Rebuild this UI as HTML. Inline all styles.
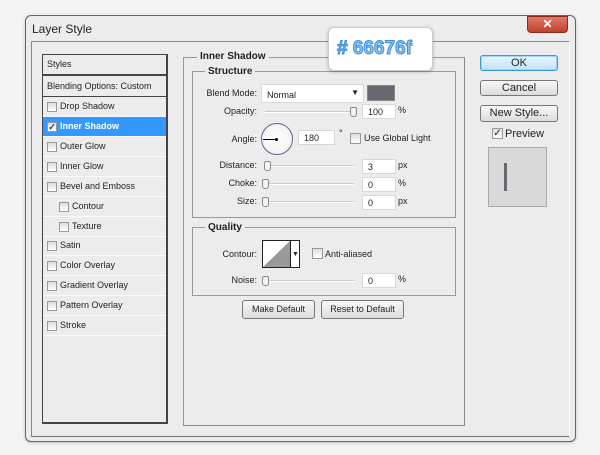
<!DOCTYPE html><html><head><style>
body{margin:0;width:600px;height:455px;background:#f4f3f3;font-family:"Liberation Sans",sans-serif;font-size:9px;color:#222;position:relative;overflow:hidden}
div,span{position:absolute;box-sizing:border-box}
.t{white-space:nowrap;line-height:11px}
.row{left:43px;width:123px;height:20px;border-bottom:1px solid #fafafa}
.row span{top:4px}
.cb{width:10px;height:10px;border:1px solid #999;background:linear-gradient(#ddd,#fff);top:5px}
.inp{height:15px;background:#fff;border:1px solid #d8d8d8;padding:2px 0 0 5px}
.sl{height:2px;background:#ccc;border-bottom:1px solid #fff}
.th{width:7px;height:10px;border:1px solid #888;border-radius:2px 2px 3px 3px;background:#f4f4f4}
.btn{border:1px solid #777;border-radius:3px;background:linear-gradient(#f8f8f8,#dcdcdc);text-align:center;font-size:11px;line-height:14px}
.lbl{text-align:right;width:70px}
</style></head><body>
<div style="left:25px;top:15px;width:551px;height:427px;border:1px solid #666;border-radius:6px;background:#ececec;box-shadow:0 1px 3px rgba(0,0,0,.2)"></div>
<div class="t" style="left:32px;top:22px;font-size:12px;line-height:14px">Layer Style</div>
<div style="left:527px;top:16px;width:41px;height:17px;background:linear-gradient(#e07a6a,#c2402c);border:1px solid #8a2a1d;border-radius:0 0 4px 4px;color:#fff;text-align:center;font-weight:bold;font-size:12px;line-height:15px">✕</div>
<div style="left:31px;top:41px;width:539px;height:396px;border:1px solid #888;border-right-color:#fff;border-bottom-color:#777"></div>
<div style="left:42px;top:54px;width:126px;height:370px;border:1px solid #444;border-width:1px 2px 2px 1px;background:#ececec"></div>
<div style="left:43px;top:54px;width:123px;height:22px;border-bottom:2px solid #444"></div>
<div class="t" style="left:47px;top:59px">Styles</div>
<div style="left:43px;top:77px;width:123px;height:20px;border-bottom:1px solid #444"></div>
<div class="t" style="left:47px;top:81px">Blending Options: Custom</div>
<div class="row" style="top:97px"><div class="cb" style="left:4px"></div><span class="t" style="left:17px">Drop Shadow</span></div>
<div class="row" style="top:117px;background:#3399ff;color:#fff;font-weight:bold"><div class="cb" style="left:4px;color:#335;font-size:9px;line-height:8px;text-align:center">✓</div><span class="t" style="left:17px">Inner Shadow</span></div>
<div class="row" style="top:137px"><div class="cb" style="left:4px"></div><span class="t" style="left:17px">Outer Glow</span></div>
<div class="row" style="top:157px"><div class="cb" style="left:4px"></div><span class="t" style="left:17px">Inner Glow</span></div>
<div class="row" style="top:177px"><div class="cb" style="left:4px"></div><span class="t" style="left:17px">Bevel and Emboss</span></div>
<div class="row" style="top:197px"><div class="cb" style="left:16px"></div><span class="t" style="left:29px">Contour</span></div>
<div class="row" style="top:217px"><div class="cb" style="left:16px"></div><span class="t" style="left:29px">Texture</span></div>
<div class="row" style="top:236px"><div class="cb" style="left:4px"></div><span class="t" style="left:17px">Satin</span></div>
<div class="row" style="top:256px"><div class="cb" style="left:4px"></div><span class="t" style="left:17px">Color Overlay</span></div>
<div class="row" style="top:276px"><div class="cb" style="left:4px"></div><span class="t" style="left:17px">Gradient Overlay</span></div>
<div class="row" style="top:296px"><div class="cb" style="left:4px"></div><span class="t" style="left:17px">Pattern Overlay</span></div>
<div class="row" style="top:316px"><div class="cb" style="left:4px"></div><span class="t" style="left:17px">Stroke</span></div>
<div style="left:183px;top:57px;width:282px;height:369px;border:1px solid #999;border-right-color:#888;border-bottom-color:#888"></div>
<div class="t" style="left:197px;top:51px;background:#ececec;padding:0 3px;font-weight:bold;font-size:10px">Inner Shadow</div>
<div style="left:192px;top:71px;width:264px;height:147px;border:1px solid #999"></div>
<div class="t" style="left:205px;top:66px;background:#ececec;padding:0 3px;font-weight:bold;font-size:10px">Structure</div>
<div class="t lbl" style="left:187px;top:88px">Blend Mode:</div>
<div class="inp" style="left:261px;top:84px;width:103px;height:19px;padding-top:5px">Normal<span style="right:4px;top:3px;font-size:8px">▼</span></div>
<div style="left:367px;top:85px;width:28px;height:16px;background:#66676f;border:1px solid #888"></div>
<div class="t lbl" style="left:187px;top:106px">Opacity:</div>
<div class="sl" style="left:265px;top:111px;width:91px"></div><div class="th" style="left:350px;top:107px"></div>
<div class="inp" style="left:362px;top:104px;width:34px">100</div><div class="t" style="left:398px;top:105px">%</div>
<div class="t lbl" style="left:187px;top:134px">Angle:</div>
<div style="left:261px;top:123px;width:32px;height:32px;border:1px solid #5a6890;border-radius:50%;background:radial-gradient(#fff,#eee)"></div>
<div style="left:263px;top:139px;width:13px;height:1px;background:#000"></div><div style="left:275px;top:138px;width:3px;height:3px;background:#000;border-radius:50%"></div>
<div class="inp" style="left:298px;top:130px;width:37px">180</div><div class="t" style="left:339px;top:128px">°</div>
<div class="cb" style="left:350px;top:133px;width:11px;height:11px"></div><div class="t" style="left:364px;top:133px">Use Global Light</div>
<div class="t lbl" style="left:187px;top:160px">Distance:</div>
<div class="sl" style="left:264px;top:165px;width:90px"></div><div class="th" style="left:264px;top:161px"></div>
<div class="inp" style="left:362px;top:159px;width:34px">3</div><div class="t" style="left:398px;top:160px">px</div>
<div class="t lbl" style="left:187px;top:178px">Choke:</div>
<div class="sl" style="left:262px;top:183px;width:92px"></div><div class="th" style="left:262px;top:179px"></div>
<div class="inp" style="left:362px;top:177px;width:34px">0</div><div class="t" style="left:398px;top:178px">%</div>
<div class="t lbl" style="left:187px;top:196px">Size:</div>
<div class="sl" style="left:262px;top:201px;width:92px"></div><div class="th" style="left:262px;top:197px"></div>
<div class="inp" style="left:362px;top:195px;width:34px">0</div><div class="t" style="left:398px;top:196px">px</div>
<div style="left:192px;top:227px;width:264px;height:69px;border:1px solid #999"></div>
<div class="t" style="left:205px;top:222px;background:#ececec;padding:0 3px;font-weight:bold;font-size:10px">Quality</div>
<div class="t lbl" style="left:187px;top:249px">Contour:</div>
<div style="left:262px;top:240px;width:38px;height:28px;border:1px solid #222;background:#fff"></div>
<svg style="position:absolute;left:263px;top:241px" width="27" height="26"><polygon points="0,26 27,0 27,26" fill="#999"/></svg>
<div style="left:290px;top:241px;width:1px;height:26px;background:#222"></div>
<div class="t" style="left:292px;top:249px;font-size:7px">▼</div>
<div class="cb" style="left:312px;top:248px;width:11px;height:11px"></div><div class="t" style="left:325px;top:249px">Anti-aliased</div>
<div class="t lbl" style="left:187px;top:275px">Noise:</div>
<div class="sl" style="left:262px;top:280px;width:92px"></div><div class="th" style="left:262px;top:276px"></div>
<div class="inp" style="left:362px;top:273px;width:34px">0</div><div class="t" style="left:398px;top:274px">%</div>
<div class="btn" style="left:242px;top:300px;width:73px;height:19px;font-size:9px;line-height:17px">Make Default</div>
<div class="btn" style="left:321px;top:300px;width:83px;height:19px;font-size:9px;line-height:17px">Reset to Default</div>
<div class="btn" style="left:480px;top:55px;width:78px;height:16px;border:1px solid #3a9ad8;background:linear-gradient(#e8f5fd,#bfe3f8);box-shadow:inset 0 0 0 1px #9ed6f6">OK</div>
<div class="btn" style="left:480px;top:80px;width:78px;height:16px">Cancel</div>
<div class="btn" style="left:480px;top:105px;width:78px;height:17px">New Style...</div>
<div class="cb" style="left:492px;top:128px;width:11px;height:11px;color:#224;font-size:10px;line-height:9px;text-align:center">✓</div>
<div class="t" style="left:505px;top:128px;font-size:11px;line-height:13px">Preview</div>
<div style="left:488px;top:147px;width:59px;height:60px;border:1px solid #aaa;background:#d9d9d9"></div>
<div style="left:504px;top:163px;width:3px;height:28px;background:#66676f"></div>
<div style="left:328px;top:27px;width:105px;height:44px;background:#fff;border:1px solid #ccc;border-radius:6px;box-shadow:0 1px 3px rgba(0,0,0,.25)"></div>
<div class="t" style="left:337px;top:37px;font-size:19px;line-height:24px;font-weight:bold;color:#8cc4ee;-webkit-text-stroke:1px #3a8fd8">#&nbsp;66676f</div>
</body></html>
